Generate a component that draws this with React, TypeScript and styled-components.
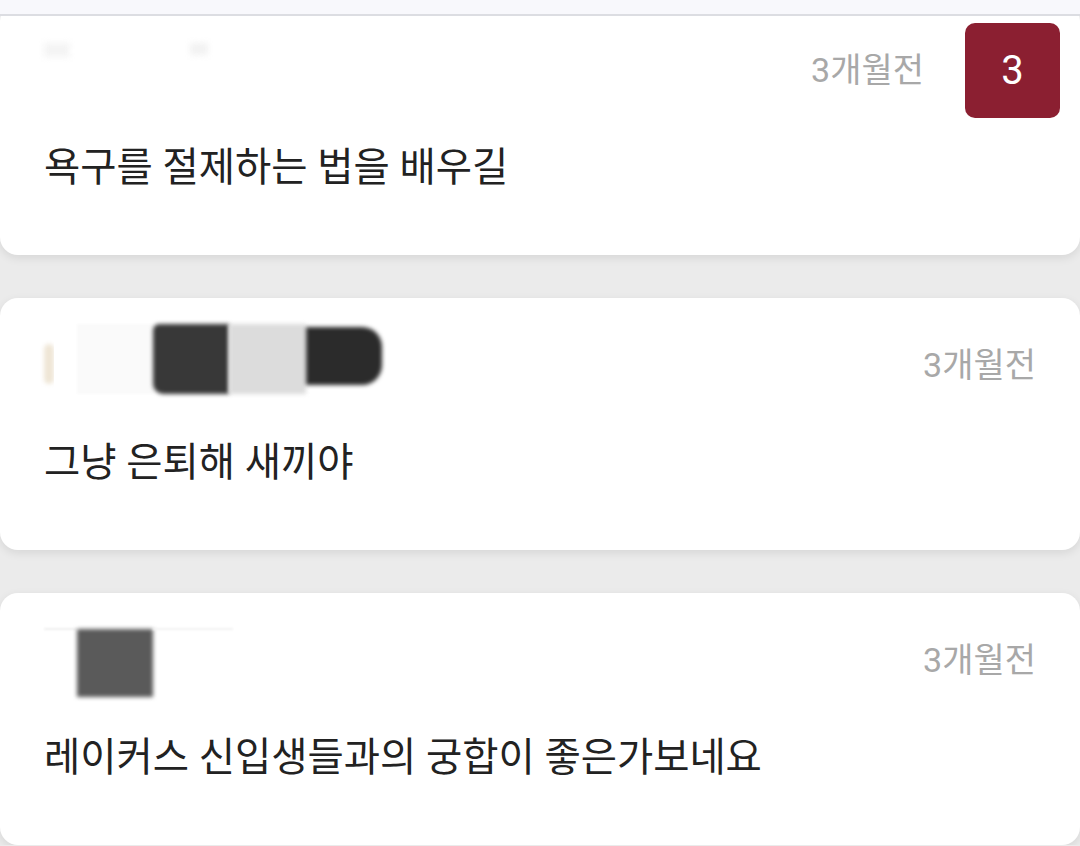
import React from "react";
import styled, { createGlobalStyle } from "styled-components";

const Global = createGlobalStyle`
  html, body {
    margin: 0;
    padding: 0;
    background: #ebebeb;
    font-family: Roboto, "Noto Sans CJK KR", "Noto Sans", sans-serif;
    overflow: hidden;
  }
`;

const TopBar = styled.div`
  position: fixed;
  top: 0;
  left: 0;
  right: 0;
  height: 14px;
  background: #f8f8fc;
  border-bottom: 2px solid #dcdde2;
  z-index: 5;
`;

const List = styled.div`
  display: flex;
  flex-direction: column;
  gap: 43px;
  padding-top: 3px;
`;

const Card = styled.div`
  position: relative;
  height: 252px;
  background: #ffffff;
  border-radius: 18px;
  box-shadow: 0 3px 10px rgba(0, 0, 0, 0.09);
  padding: 0 44px;
  box-sizing: border-box;
  display: flex;
  flex-direction: column;
`;

const MetaRow = styled.div<{ $reserve: number }>`
  display: flex;
  align-items: center;
  justify-content: space-between;
  height: 78px;
  margin-top: 25px;
  padding-right: ${(p) => p.$reserve}px;
`;

const NameMask = styled.div`
  display: flex;
  align-items: flex-start;
  height: 78px;
  margin-top: 2px;
`;

const MaskBlock = styled.div<{ $w: number; $h: number; $c: string; $r?: string; $mt?: number; $blur?: number }>`
  width: ${(p) => p.$w}px;
  height: ${(p) => p.$h}px;
  margin-top: ${(p) => p.$mt ?? 0}px;
  background: ${(p) => p.$c};
  border-radius: ${(p) => p.$r ?? "0"};
  filter: blur(${(p) => p.$blur ?? 2}px);
  flex: none;
`;

const DateText = styled.span`
  font-size: 34px;
  color: #a8a8a8;
`;

const Body = styled.div`
  margin-top: 37px;
  font-size: 39.4px;
  line-height: 50px;
  color: #222222;
`;

const RankBadge = styled.div`
  position: absolute;
  top: 20px;
  right: 20px;
  width: 95px;
  height: 95px;
  border-radius: 10px;
  background: #8b1f31;
  color: #ffffff;
  display: flex;
  align-items: center;
  justify-content: center;
  font-size: 40px;
  font-family: Roboto, sans-serif;
`;

type Block = { w: number; h: number; c: string; r?: string; mt?: number; blur?: number };

type Item = {
  mask: Block[];
  date: string;
  text: string;
  rank?: number;
};

const items: Item[] = [
  {
    mask: [
      { w: 26, h: 14, c: "#f4f4f4", mt: 14, blur: 3 },
      { w: 120, h: 4, c: "#ffffff", mt: 20 },
      { w: 18, h: 12, c: "#f2f2f2", mt: 14, blur: 3 },
    ],
    date: "3개월전",
    text: "욕구를 절제하는 법을 배우길",
    rank: 3,
  },
  {
    mask: [
      { w: 10, h: 40, c: "#efe6d6", mt: 20, r: "5px", blur: 2 },
      { w: 23, h: 70, c: "#ffffff", blur: 0 },
      { w: 76, h: 70, c: "#fafafa", blur: 1 },
      { w: 76, h: 70, c: "#383838", r: "6px 0 0 10px", blur: 2 },
      { w: 77, h: 70, c: "#dcdcdc", blur: 2 },
      { w: 76, h: 58, c: "#2b2b2b", r: "0 20px 20px 0", mt: 3, blur: 2 },
    ],
    date: "3개월전",
    text: "그냥 은퇴해 새끼야",
  },
  {
    mask: [
      { w: 33, h: 2, c: "#efefef", mt: 9, blur: 1 },
      { w: 76, h: 68, c: "#5a5a5a", mt: 10, blur: 2 },
      { w: 80, h: 2, c: "#f2f2f2", mt: 9, blur: 1 },
    ],
    date: "3개월전",
    text: "레이커스 신입생들과의 궁합이 좋은가보네요",
  },
];

export default function App() {
  return (
    <>
      <Global />
      <TopBar />
      <List>
        {items.map((it, i) => (
          <Card key={i}>
            <MetaRow $reserve={it.rank ? 112 : 0}>
              <NameMask>
                {it.mask.map((b, j) => (
                  <MaskBlock key={j} $w={b.w} $h={b.h} $c={b.c} $r={b.r} $mt={b.mt} $blur={b.blur} />
                ))}
              </NameMask>
              <DateText>{it.date}</DateText>
            </MetaRow>
            <Body>{it.text}</Body>
            {it.rank !== undefined && <RankBadge>{it.rank}</RankBadge>}
          </Card>
        ))}
      </List>
    </>
  );
}
